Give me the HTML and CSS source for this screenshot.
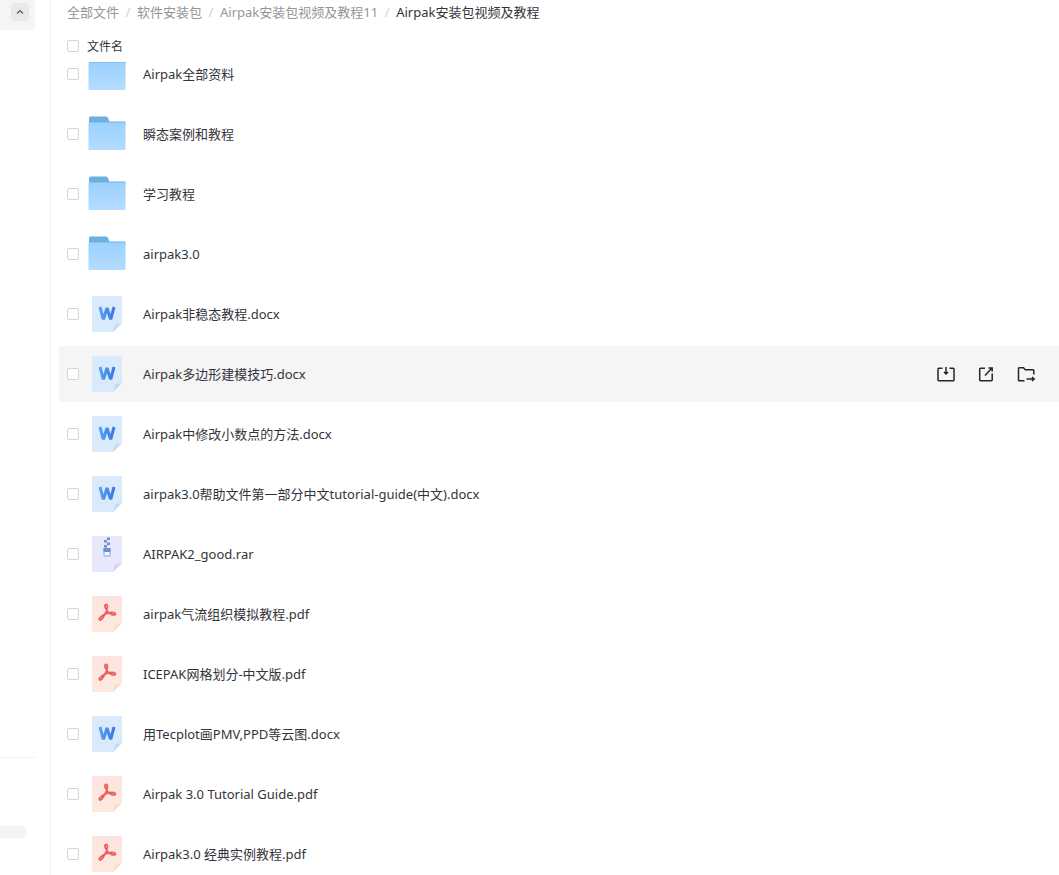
FILE: index.html
```html
<!DOCTYPE html>
<html lang="zh-CN">
<head>
  <meta charset="UTF-8" />
  <meta name="viewport" content="width=device-width, initial-scale=1.0"/>
  <title>Airpak安装包视频及教程</title>
  <link rel="stylesheet" href="styles.css">
</head>
<body>
  <!-- shared icons -->
  <svg class="sprite" aria-hidden="true">
    <defs>
      <linearGradient id="folderFill" x1="0" y1="0" x2="0" y2="1">
        <stop offset="0" stop-color="#9bd1fd"/>
        <stop offset="1" stop-color="#b4dcff"/>
      </linearGradient>
      <linearGradient id="wordFill" x1="0" y1="0" x2="1" y2="0">
        <stop offset="0" stop-color="#559ff8"/>
        <stop offset="1" stop-color="#3c78e0"/>
      </linearGradient>
      <linearGradient id="pdfFill" x1="0" y1="0" x2="0" y2="1">
        <stop offset="0" stop-color="#fde3e1"/>
        <stop offset="1" stop-color="#feeade"/>
      </linearGradient>
    </defs>
    <symbol id="folder" viewBox="0 0 40 40">
      <path d="M2 10V4a1.500 1.500 0 0 1 1.500-1.500h15.500q1.500 0 2 1.500l1.500 4h-3v2z" fill="#6dafdf"/>
      <path d="M19 7.500h18.500a1 1 0 0 1 1 1V11H19z" fill="#6dafdf"/>
      <rect x="1.500" y="8.500" width="37" height="27.500" rx="1" fill="url(#folderFill)"/>
    </symbol>
    <symbol id="word" viewBox="0 0 40 40">
      <path d="M6 2h28a1 1 0 0 1 1 1v26l-9 9H6a1 1 0 0 1-1-1V3a1 1 0 0 1 1-1z" fill="#d9eafc"/>
      <path d="M35 29l-9 9 1.500-6.500q.5-1.500 2-1.700z" fill="#c3dcf6"/>
      <path d="M13 13l3 11.200h.8L20 14l3.200 10.200h.8L27 13" fill="none" stroke="url(#wordFill)" stroke-width="3" stroke-linejoin="miter" stroke-miterlimit="2"/>
    </symbol>
    <symbol id="rar" viewBox="0 0 40 40">
      <path d="M6 2h28a1 1 0 0 1 1 1v26l-9 9H6a1 1 0 0 1-1-1V3a1 1 0 0 1 1-1z" fill="#e8e8fd"/>
      <path d="M35 29l-9 9 1.500-6.500q.5-1.500 2-1.700z" fill="#d3d3f6"/>
      <path d="M20 3.500h3v2.500h-3zM17 6h3v2.500h-3zM20 8.500h3V11h-3zM17 11h3v2.500h-3z" fill="#6f8fd0"/>
      <rect x="17" y="14.500" width="6" height="7.500" rx=".5" fill="#f4f6ff" stroke="#8ba0d8"/>
      <path d="M16.500 14h7v4h-7z" fill="#6f8fd0"/>
    </symbol>
    <symbol id="pdf" viewBox="0 0 40 40">
      <path d="M6 2h28a1 1 0 0 1 1 1v26l-9 9H6a1 1 0 0 1-1-1V3a1 1 0 0 1 1-1z" fill="url(#pdfFill)"/>
      <path d="M35 29l-9 9 1.500-6.500q.5-1.500 2-1.700z" fill="#fddccd"/>
      <path d="M19.300 10.500c-1.700 0-1.700 1.700-.8 3.500 1.300 3 3.600 5.400 6.500 6.600 1.500.6 3.400.5 3.400-.7 0-1.500-3.200-1.600-5.700-1.200-2.900.5-5.600 1.600-7.800 3.200-1.500 1.100-3.200 2.500-2.500 3.700.8 1.200 2.700-.6 3.800-2.400 1.900-3 3.400-6 4-9.100.3-1.800.4-3.600-.9-3.600z" fill="none" stroke="#ea5f5c" stroke-width="1.800" stroke-linejoin="round"/>
    </symbol>
  </svg>

  <div class="layout">
    <aside class="sidebar">
      <div class="side-top">
        <button class="collapse" aria-label="收起">
          <svg width="10" height="10" viewBox="0 0 10 10"><path d="M2 6.500l3-3 3 3"/></svg>
        </button>
      </div>
      <div class="side-bottom">
        <div class="quota"></div>
      </div>
    </aside>

    <main class="content">
      <nav class="breadcrumb">
        <a href="#">全部文件</a><span class="sep">/</span>
        <a href="#">软件安装包</a><span class="sep">/</span>
        <a href="#">Airpak安装包视频及教程11</a><span class="sep">/</span>
        <a href="#" class="current">Airpak安装包视频及教程</a>
      </nav>

      <div class="list-head">
        <input type="checkbox" id="checkAll">
        <label for="checkAll">文件名</label>
      </div>

      <div class="list-body">
        <ul class="files">
          <li class="file">
            <input type="checkbox" id="f1">
            <svg class="icon"><use href="#folder"/></svg>
            <label class="name" for="f1">Airpak全部资料</label>
          </li>
          <li class="file">
            <input type="checkbox" id="f2">
            <svg class="icon"><use href="#folder"/></svg>
            <label class="name" for="f2">瞬态案例和教程</label>
          </li>
          <li class="file">
            <input type="checkbox" id="f3">
            <svg class="icon"><use href="#folder"/></svg>
            <label class="name" for="f3">学习教程</label>
          </li>
          <li class="file">
            <input type="checkbox" id="f4">
            <svg class="icon"><use href="#folder"/></svg>
            <label class="name" for="f4">airpak3.0</label>
          </li>
          <li class="file">
            <input type="checkbox" id="f5">
            <svg class="icon"><use href="#word"/></svg>
            <label class="name" for="f5">Airpak非稳态教程.docx</label>
          </li>
          <li class="file active">
            <input type="checkbox" id="f6">
            <svg class="icon"><use href="#word"/></svg>
            <label class="name" for="f6">Airpak多边形建模技巧.docx</label>
            <div class="actions">
              <button aria-label="下载">
                <svg viewBox="0 0 20 20"><path d="M6.500 4.200H2.800a.8.800 0 0 0-.8.800v10.900a.8.800 0 0 0 .8.800h14.400a.8.800 0 0 0 .8-.8V5a.8.800 0 0 0-.8-.8h-3.700M10 3v6.500M8 8l2 2 2-2"/></svg>
              </button>
              <button aria-label="分享">
                <svg viewBox="0 0 20 20"><path d="M9 4.200H4.500a.8.800 0 0 0-.8.800v10.900a.8.800 0 0 0 .8.800h10.900a.8.800 0 0 0 .8-.8V9.500M9 11.500L15.500 4.500M12.500 4h3.700v3.500"/></svg>
              </button>
              <button aria-label="移动">
                <svg viewBox="0 0 20 20"><path d="M8.500 16.700H3.300a.8.800 0 0 1-.8-.8V4.500a.8.800 0 0 1 .8-.8h4.200l1.800 2H17a.8.800 0 0 1 .8.800V10.500M10.500 15H18M16 13l2.200 2-2.200 2"/></svg>
              </button>
            </div>
          </li>
          <li class="file">
            <input type="checkbox" id="f7">
            <svg class="icon"><use href="#word"/></svg>
            <label class="name" for="f7">Airpak中修改小数点的方法.docx</label>
          </li>
          <li class="file">
            <input type="checkbox" id="f8">
            <svg class="icon"><use href="#word"/></svg>
            <label class="name" for="f8">airpak3.0帮助文件第一部分中文tutorial-guide(中文).docx</label>
          </li>
          <li class="file">
            <input type="checkbox" id="f9">
            <svg class="icon"><use href="#rar"/></svg>
            <label class="name" for="f9">AIRPAK2_good.rar</label>
          </li>
          <li class="file">
            <input type="checkbox" id="f10">
            <svg class="icon"><use href="#pdf"/></svg>
            <label class="name" for="f10">airpak气流组织模拟教程.pdf</label>
          </li>
          <li class="file">
            <input type="checkbox" id="f11">
            <svg class="icon"><use href="#pdf"/></svg>
            <label class="name" for="f11">ICEPAK网格划分-中文版.pdf</label>
          </li>
          <li class="file">
            <input type="checkbox" id="f12">
            <svg class="icon"><use href="#word"/></svg>
            <label class="name" for="f12">用Tecplot画PMV,PPD等云图.docx</label>
          </li>
          <li class="file">
            <input type="checkbox" id="f13">
            <svg class="icon"><use href="#pdf"/></svg>
            <label class="name" for="f13">Airpak 3.0 Tutorial Guide.pdf</label>
          </li>
          <li class="file">
            <input type="checkbox" id="f14">
            <svg class="icon"><use href="#pdf"/></svg>
            <label class="name" for="f14">Airpak3.0 经典实例教程.pdf</label>
          </li>
        </ul>
      </div>
    </main>
  </div>
</body>
</html>
```
FILE: styles.css
```css
* {
  box-sizing: border-box;
}
body {
  margin: 0;
  font-family: "Noto Sans", "Noto Sans CJK SC", sans-serif;
  font-size: 13px;
  color: #33343a;
  background: #fff;
}
button {
  padding: 0;
  border: none;
  background: none;
  cursor: pointer;
}
a {
  color: inherit;
  text-decoration: none;
}
.sprite {
  position: absolute;
  width: 0;
  height: 0;
}
.layout {
  display: flex;
  height: 100vh;
  overflow: hidden;
}

/* sidebar */
.sidebar {
  display: flex;
  flex-direction: column;
  justify-content: space-between;
  width: 51px;
  flex-shrink: 0;
  border-right: 1px solid #f2f2f3;
}
.side-top {
  width: 35px;
  height: 30px;
  padding: 3px 6px 0 11px;
  background: #f5f5f6;
  border-radius: 0 0 4px 0;
}
.collapse {
  display: flex;
  align-items: center;
  justify-content: center;
  width: 18px;
  height: 18px;
  border-radius: 4px;
  background: #e9e9eb;
}
.collapse svg {
  fill: none;
  stroke: #55565c;
  stroke-width: 1.2;
}
.side-bottom {
  width: 36px;
  height: 118px;
  padding-top: 68px;
  border-top: 1px solid #f2f2f3;
}
.quota {
  width: 27px;
  height: 12px;
  background: #f4f4f5;
  border-radius: 0 6px 6px 0;
}

/* file list */
.content {
  display: flex;
  flex-direction: column;
  flex: 1;
  min-width: 0;
  padding-left: 8px;
}
.breadcrumb {
  display: flex;
  height: 30px;
  padding-left: 8px;
  line-height: 24px;
  color: #94959a;
  flex-shrink: 0;
}
.breadcrumb .sep {
  width: 18px;
  text-align: center;
  color: #d0d1d4;
}
.breadcrumb .current {
  color: #33343a;
}
.list-head {
  display: flex;
  align-items: center;
  gap: 8px;
  height: 32px;
  padding-left: 8px;
  font-size: 12px;
  flex-shrink: 0;
}
input[type="checkbox"] {
  appearance: none;
  width: 12px;
  height: 12px;
  margin: 0;
  border: 1px solid #d3d4d7;
  border-radius: 2px;
  background: #fff;
  flex-shrink: 0;
}
input[type="checkbox"]:checked {
  background: #06a7ff;
  border-color: #06a7ff;
}
.list-body {
  flex: 1;
  min-height: 0;
  overflow: hidden;
}
/* list is scrolled a little under the header */
.files {
  display: flex;
  flex-direction: column;
  gap: 4px;
  margin: -16px 0 0;
  padding: 0;
  list-style: none;
}
.file {
  display: flex;
  align-items: center;
  height: 56px;
  padding: 0 23px 0 8px;
  border-radius: 4px 0 0 4px;
}
.file.active,
.file:hover {
  background: #f5f5f6;
}
.icon {
  width: 40px;
  height: 40px;
  margin: 0 16px 0 8px;
  flex-shrink: 0;
}
.name {
  flex: 1;
  line-height: 20px;
  overflow: hidden;
  white-space: nowrap;
  text-overflow: ellipsis;
}
.actions {
  display: flex;
  gap: 20px;
}
.actions button {
  width: 20px;
  height: 20px;
}
.actions svg {
  display: block;
  width: 20px;
  height: 20px;
  fill: none;
  stroke: #25262b;
  stroke-width: 1.5;
}
```
